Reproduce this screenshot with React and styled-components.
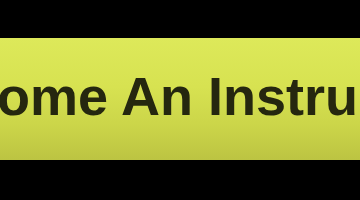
import React from "react";
import styled, { createGlobalStyle } from "styled-components";

const GlobalStyle = createGlobalStyle`
  html, body {
    margin: 0;
    padding: 0;
    background: #000;
    width: 360px;
    height: 200px;
    overflow: hidden;
  }
`;

const Stage = styled.div`
  width: 360px;
  height: 200px;
  box-sizing: border-box;
  padding-top: 38px;
  display: flex;
  align-items: flex-start;
  background: #000;
  overflow: hidden;
`;

const Button = styled.div`
  width: 100%;
  height: 122px;
  box-sizing: border-box;
  padding-top: 31px;
  display: flex;
  align-items: flex-start;
  overflow: hidden;
  background: linear-gradient(
    to bottom,
    #dde95a 0%,
    #d7e251 40%,
    #cbd549 72%,
    #bcc442 100%
  );
`;

const Label = styled.span`
  flex: none;
  margin-left: ${props => props.offset}px;
  font-family: "Liberation Sans", Arial, sans-serif;
  font-size: 54px;
  line-height: 1;
  font-weight: 700;
  color: #25270f;
  white-space: nowrap;
`;

export default function App() {
  return (
    <>
      <GlobalStyle />
      <Stage>
        <Button>
          <Label offset={-102}>Become An Instructor</Label>
        </Button>
      </Stage>
    </>
  );
}
